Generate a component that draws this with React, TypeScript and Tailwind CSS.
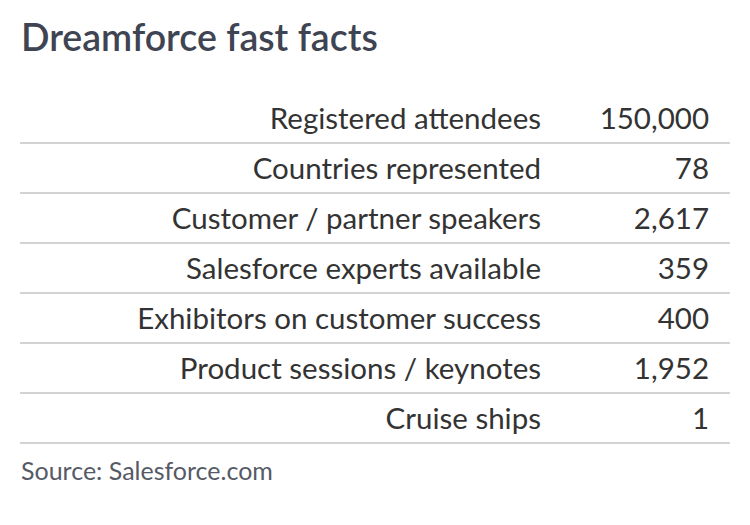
const facts = [
  { label: "Registered attendees", value: "150,000" },
  { label: "Countries represented", value: "78" },
  { label: "Customer / partner speakers", value: "2,617" },
  { label: "Salesforce experts available", value: "359" },
  { label: "Exhibitors on customer success", value: "400" },
  { label: "Product sessions / keynotes", value: "1,952" },
  { label: "Cruise ships", value: "1" },
];

export default function App() {
  return (
    <div className="w-[750px] h-[525px] bg-white px-5 pt-[14px] font-['Lato',sans-serif]">
      <h1 className="text-[37.5px] leading-[46px] font-semibold text-[#3f4452] pl-[1px]">
        Dreamforce fast facts
      </h1>
      <div className="mt-[34px] w-[710px]">
        {facts.map((f) => (
          <div key={f.label} className="flex items-center h-[50px] border-b-2 border-[#d3d3d3]">
            <div className="w-[521px] text-right text-[29.5px] text-[#333333]">{f.label}</div>
            <div className="w-[168px] text-right text-[29.5px] text-[#333333]">{f.value}</div>
          </div>
        ))}
      </div>
      <div className="mt-[8px] text-[25px] leading-[36px] text-[#555a66] pl-[1px]">Source: Salesforce.com</div>
    </div>
  );
}
